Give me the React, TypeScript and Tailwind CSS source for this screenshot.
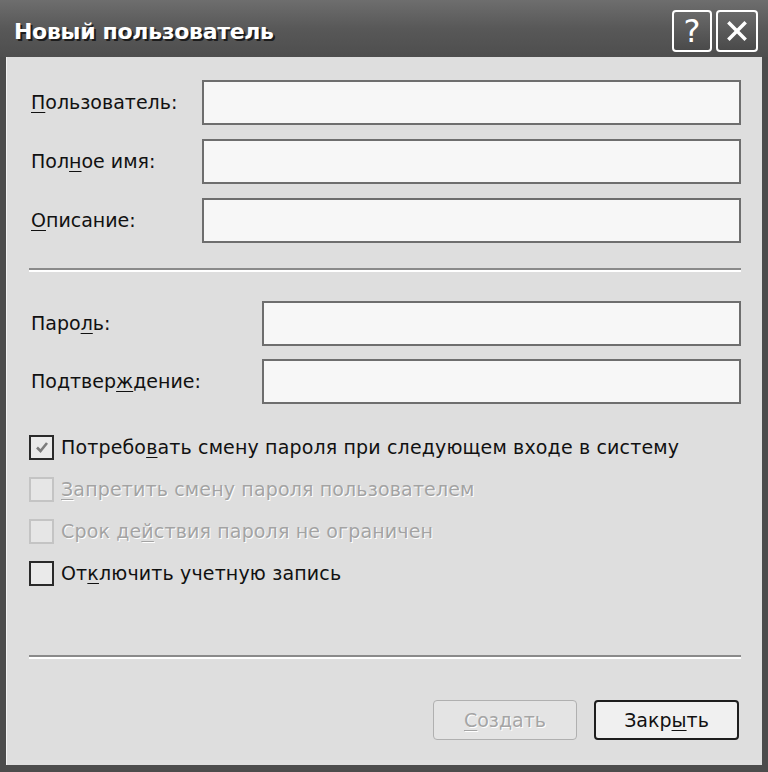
import type { ReactNode } from 'react';

const FONT = { fontFamily: '"DejaVu Sans", "Liberation Sans", sans-serif' };

function Acc({ children }: { children: ReactNode }) {
  return <span className="underline decoration-1 underline-offset-[3px]">{children}</span>;
}

function Field({ label, labelWidth }: { label: ReactNode; labelWidth: string }) {
  return (
    <div className="flex h-[45px] items-center">
      <div className={`${labelWidth} shrink-0 pl-[24px] text-[19px] text-[#111]`}>{label}</div>
      <div className="h-full flex-1 border-2 border-[#6e6e6e] bg-[#f7f7f7]" />
    </div>
  );
}

function Separator() {
  return (
    <div className="ml-[22px] mr-[21px]">
      <div className="h-[2px] bg-[#8a8a8a]" />
      <div className="h-[2px] bg-white" />
    </div>
  );
}

function Check({ checked, disabled, children }: { checked?: boolean; disabled?: boolean; children: ReactNode }) {
  return (
    <div className="flex h-[42px] items-center gap-[7px] pl-[22px]">
      <div
        className={`flex h-[25px] w-[25px] items-center justify-center border-2 ${
          disabled ? 'border-[#c4c4c4] bg-[#e6e6e6]' : 'border-[#2a2a2a] bg-[#eaeaea]'
        }`}
      >
        {checked && (
          <svg viewBox="0 0 16 16" className="h-[16px] w-[16px]">
            <path d="M3 8.5 L6.5 12 L13 4" fill="none" stroke="#7c7c7c" strokeWidth="2.6" />
          </svg>
        )}
      </div>
      <span
        className={`text-[19px] tracking-[0.15px] ${
          disabled ? 'text-[#a3a3a3] [text-shadow:1px_1px_0_#fff]' : 'text-[#111]'
        }`}
      >
        {children}
      </span>
    </div>
  );
}

export default function App() {
  return (
    <div className="flex h-[772px] w-[768px] flex-col bg-[#4c4c4c]" style={FONT}>
      <div className="flex h-[57px] shrink-0 items-center justify-between bg-gradient-to-b from-[#6e6e6e] via-[#585858] to-[#4e4e4e] pl-[14px] pr-[10px]">
        <span className="pt-[6px] text-[22px] font-bold tracking-[-0.3px] text-white [text-shadow:2px_2px_0_#1c1c1c]">
          Новый пользователь
        </span>
        <div className="flex gap-[4px] pt-[4px]">
          <div className="flex h-[42px] w-[40px] items-center justify-center rounded-[4px] border-2 border-white bg-gradient-to-b from-[#6a6a6a] to-[#4a4a4a] text-[32px] leading-none text-white">
            ?
          </div>
          <div className="flex h-[42px] w-[42px] items-center justify-center rounded-[4px] border-2 border-white bg-gradient-to-b from-[#6a6a6a] to-[#4a4a4a]">
            <svg viewBox="0 0 24 24" className="h-[26px] w-[26px]">
              <path d="M4 4 L20 20 M20 4 L4 20" stroke="#fff" strokeWidth="3.2" />
            </svg>
          </div>
        </div>
      </div>

      <div className="mb-[7px] ml-[6px] mr-[6px] flex flex-1 flex-col border-l border-[#f2f2f2] bg-[#dedede]">
        <div className="flex flex-col gap-[14px] pr-[21px] pt-[23px]">
          <Field
            labelWidth="w-[195px]"
            label={
              <>
                <Acc>П</Acc>ользователь:
              </>
            }
          />
          <Field
            labelWidth="w-[195px]"
            label={
              <>
                Пол<Acc>н</Acc>ое имя:
              </>
            }
          />
          <Field
            labelWidth="w-[195px]"
            label={
              <>
                <Acc>О</Acc>писание:
              </>
            }
          />
        </div>

        <div className="mt-[25px]">
          <Separator />
        </div>

        <div className="flex flex-col gap-[13px] pr-[21px] pt-[29px]">
          <Field
            labelWidth="w-[255px]"
            label={
              <>
                Паро<Acc>л</Acc>ь:
              </>
            }
          />
          <Field
            labelWidth="w-[255px]"
            label={
              <>
                Подтвер<Acc>ж</Acc>дение:
              </>
            }
          />
        </div>

        <div className="mt-[22px] flex flex-col">
          <Check checked>
            Потребо<Acc>в</Acc>ать смену пароля при следующем входе в систему
          </Check>
          <Check disabled>
            <Acc>З</Acc>апретить смену пароля пользователем
          </Check>
          <Check disabled>
            Срок де<Acc>й</Acc>ствия пароля не ограничен
          </Check>
          <Check>
            От<Acc>к</Acc>лючить учетную запись
          </Check>
        </div>

        <div className="mt-[61px]">
          <Separator />
        </div>

        <div className="flex justify-end gap-[17px] pr-[23px] pt-[41px]">
          <div className="flex h-[40px] w-[144px] items-center justify-center rounded-[4px] border border-[#b0b0b0] bg-[#e4e4e4] text-[19px] text-[#a5a5a5] [text-shadow:1px_1px_0_#fff]">
            <Acc>С</Acc>оздать
          </div>
          <div className="flex h-[40px] w-[145px] items-center justify-center rounded-[4px] border-2 border-[#1e1e1e] bg-[#f0f0f0] text-[19px] text-[#111]">
            Закр<Acc>ы</Acc>ть
          </div>
        </div>
      </div>
    </div>
  );
}
